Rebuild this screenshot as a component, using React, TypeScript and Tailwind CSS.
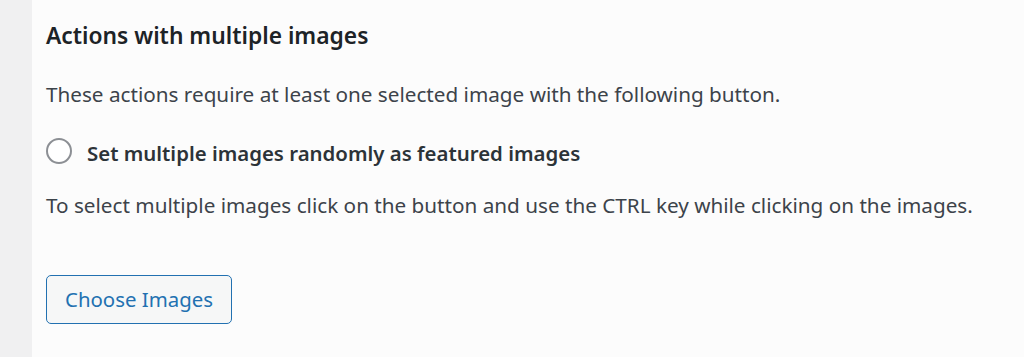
export default function App() {
  return (
    <div className="flex h-[357px] w-[1024px] overflow-hidden bg-[#f0f0f1] font-['Noto_Sans',sans-serif]">
      <div className="w-[32px] shrink-0" />
      <div className="flex-1 bg-[#fcfcfc] pl-[14px] pt-[21px]">
        <h2 className="text-[22.8px] font-semibold leading-[30px] text-[#1d2327]">
          Actions with multiple images
        </h2>
        <p className="mt-[28px] text-[20.7px] leading-[30px] text-[#3c434a]">
          These actions require at least one selected image with the following button.
        </p>
        <label className="mt-[29px] flex items-start gap-[15px]">
          <span className="h-[26px] w-[26px] shrink-0 rounded-full border-2 border-[#8c8f94] bg-white" />
          <span className="text-[20.4px] font-semibold leading-[30px] text-[#2c3338]">
            Set multiple images randomly as featured images
          </span>
        </label>
        <p className="mt-[22px] text-[20.7px] leading-[30px] text-[#3c434a]">
          To select multiple images click on the button and use the CTRL key while clicking on the images.
        </p>
        <button className="mt-[55px] h-[49px] w-[186px] rounded-[5px] border-[1.75px] border-[#2271b1] bg-[#f6f7f7] text-[20.4px] text-[#2271b1]">
          Choose Images
        </button>
      </div>
    </div>
  );
}
